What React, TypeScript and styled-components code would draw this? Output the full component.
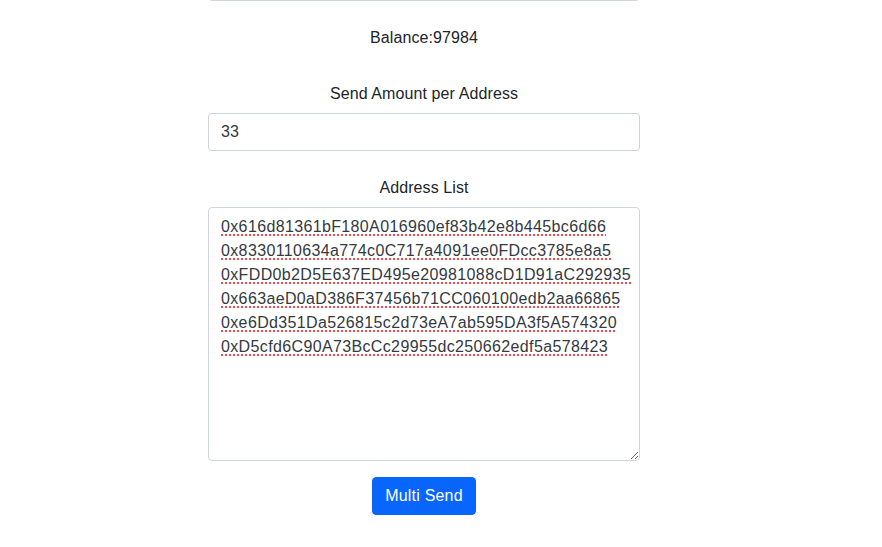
import React from "react";
import styled, { createGlobalStyle } from "styled-components";

const Global = createGlobalStyle`
  html, body { margin: 0; padding: 0; background: #fff; }
  body {
    font-family: "Liberation Sans", Arial, sans-serif;
    font-size: 16px;
    line-height: 1.5;
    color: #212529;
    overflow: hidden;
  }
  * { box-sizing: border-box; }
`;

const Page = styled.div`
  width: 882px;
  height: 547px;
  overflow: hidden;
`;

const Column = styled.div`
  width: 432px;
  margin: -37px 0 0 208px;
  display: flex;
  flex-direction: column;
`;

const Field = styled.input`
  display: block;
  width: 100%;
  height: 38px;
  padding: 6px 12px;
  font: inherit;
  color: #343a40;
  background: #fff;
  border: 1px solid #ced4da;
  border-radius: 4px;
  outline: none;
`;

const Balance = styled.div`
  text-align: center;
  margin: 25px 0 31px;
  letter-spacing: 0.1px;
`;

const Label = styled.label`
  display: block;
  text-align: center;
  padding-top: 1px;
  margin-bottom: 7px;
  letter-spacing: 0.1px;
`;

const Group = styled.div<{ $gap: number }>`
  margin-bottom: ${(p) => p.$gap}px;
`;

const Area = styled.textarea`
  display: block;
  width: 100%;
  height: 254px;
  padding: 7px 12px 5px;
  font: inherit;
  line-height: 24px;
  letter-spacing: 0.36px;
  white-space: pre;
  overflow: hidden;
  color: #343a40;
  background: #fff;
  border: 1px solid #ced4da;
  border-radius: 4px;
  outline: none;
  resize: vertical;
  text-decoration: underline dotted #e5484d;
  text-decoration-thickness: 2px;
  text-underline-offset: 2px;
`;

const Actions = styled.div`
  display: flex;
  justify-content: center;
`;

const Button = styled.button`
  font: inherit;
  color: #fff;
  background: #0866fd;
  border: 1px solid #0866fd;
  border-radius: 4px;
  padding: 6px 12px;
  height: 38px;
  letter-spacing: 0.2px;
  cursor: pointer;
`;

const addresses = [
  "0x616d81361bF180A016960ef83b42e8b445bc6d66",
  "0x8330110634a774c0C717a4091ee0FDcc3785e8a5",
  "0xFDD0b2D5E637ED495e20981088cD1D91aC292935",
  "0x663aeD0aD386F37456b71CC060100edb2aa66865",
  "0xe6Dd351Da526815c2d73eA7ab595DA3f5A574320",
  "0xD5cfd6C90A73BcCc29955dc250662edf5a578423",
].join("\n");

export default function App() {
  return (
    <Page>
      <Global />
      <Column>
        <Field readOnly defaultValue="" />
        <Balance>Balance:97984</Balance>
        <Group $gap={24}>
          <Label>Send Amount per Address</Label>
          <Field defaultValue="33" />
        </Group>
        <Group $gap={16}>
          <Label>Address List</Label>
          <Area defaultValue={addresses} spellCheck wrap="off" />
        </Group>
        <Actions>
          <Button>Multi Send</Button>
        </Actions>
      </Column>
    </Page>
  );
}
